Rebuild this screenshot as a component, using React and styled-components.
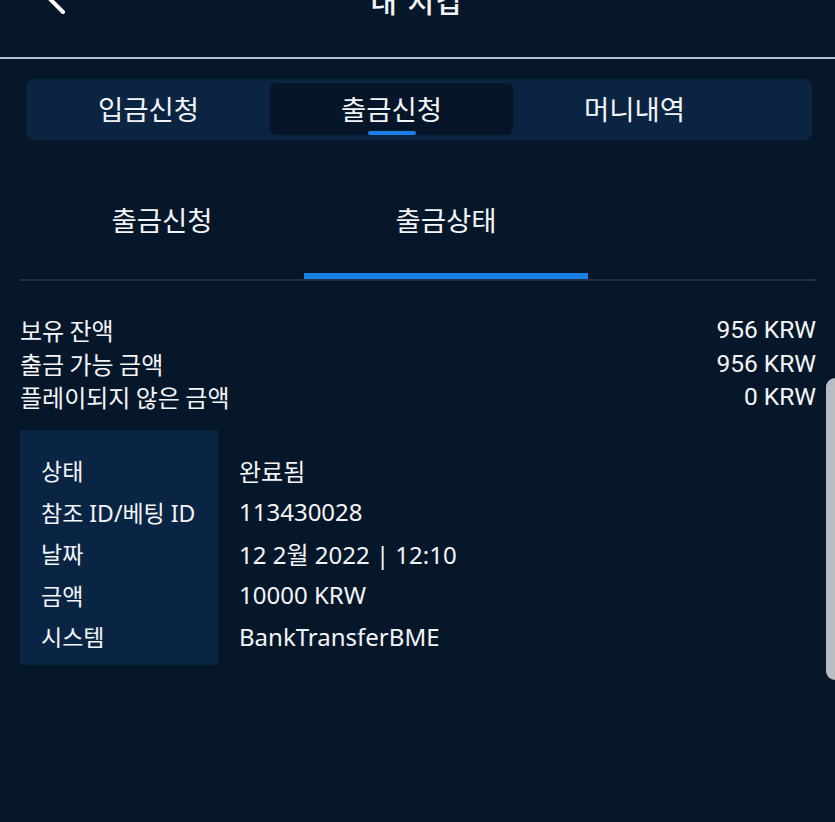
import React, { useState } from "react";
import styled, { createGlobalStyle } from "styled-components";

const GlobalStyle = createGlobalStyle`
  html, body {
    margin: 0;
    padding: 0;
    background: #07172a;
  }
  body {
    font-family: "Noto Sans", "Noto Sans CJK KR", sans-serif;
    color: #f3f5f8;
  }
  * { box-sizing: border-box; }
`;

const Page = styled.div`
  position: relative;
  width: 835px;
  height: 822px;
  overflow: hidden;
  background: #07172a;
`;

const Header = styled.header`
  position: relative;
  height: 59px;
  display: flex;
  justify-content: center;
  border-bottom: 2px solid #b4bcc5;
`;

const BackButton = styled.button`
  position: absolute;
  left: 40px;
  top: -25px;
  width: 30px;
  height: 45px;
  padding: 0;
  border: 0;
  background: none;
  color: #fff;
`;

const Title = styled.h1`
  margin: -14px 0 0;
  font-family: "Noto Sans CJK KR", sans-serif;
  font-size: 29px;
  font-weight: 500;
  line-height: 29px;
  letter-spacing: 2px;
`;

const Segment = styled.nav`
  display: flex;
  margin: 20px 23px 0 26px;
  height: 61px;
  padding: 4px 0 5px 1px;
  background: #0b2441;
  border-radius: 8px;
`;

const SegmentTab = styled.button`
  position: relative;
  width: 243px;
  border: 0;
  border-radius: 6px;
  background: ${(p) => (p.$active ? "#061628" : "transparent")};
  color: #f3f5f8;
  font-family: "Noto Sans CJK KR", sans-serif;
  font-size: 27.5px;
  font-weight: 400;
  padding: 0 0 2px;
  cursor: pointer;

  &::after {
    content: "";
    display: ${(p) => (p.$active ? "block" : "none")};
    position: absolute;
    left: 50%;
    bottom: 0;
    width: 48px;
    height: 4px;
    margin-left: -24px;
    border-radius: 2px;
    background: #1a80e6;
  }
`;

const SubTabs = styled.div`
  display: flex;
  margin: 0 20px;
  border-bottom: 2px solid #243244;
`;

const SubTab = styled.button`
  width: 284px;
  height: 139px;
  padding: 59px 0 0;
  display: flex;
  justify-content: center;
  align-items: flex-start;
  border: 0;
  border-bottom: 6px solid ${(p) => (p.$active ? "#1a80e6" : "transparent")};
  background: none;
  color: #f3f5f8;
  font-family: "Noto Sans CJK KR", sans-serif;
  font-size: 27.5px;
  font-weight: 400;
  line-height: 40px;
  cursor: pointer;
`;

const Balances = styled.div`
  margin: 32px 19px 0 20px;
  display: flex;
  flex-direction: column;
`;

const BalanceRow = styled.div`
  display: flex;
  justify-content: space-between;
  align-items: center;
  height: 33.5px;
  font-family: "Noto Sans CJK KR", sans-serif;
  font-size: 24px;
`;

const Amount = styled.span`
  font-family: "Roboto", "Noto Sans CJK KR", sans-serif;
  font-size: 24.5px;
`;

const Details = styled.div`
  display: grid;
  grid-template-columns: 198px 1fr;
  margin: 16px 20px 0;
`;

const Column = styled.div`
  display: flex;
  flex-direction: column;
  padding: 20px 0 8px 21px;
  background: ${(p) => (p.$shaded ? "#0a2543" : "transparent")};
`;

const Cell = styled.div`
  height: 41.5px;
  display: flex;
  align-items: center;
  font-family: "Noto Sans", "Noto Sans CJK KR", sans-serif;
  font-size: ${(p) => (p.$value ? "24px" : "23px")};
  white-space: nowrap;
`;

const Scrollbar = styled.div`
  position: absolute;
  right: 0;
  top: 378px;
  width: 9px;
  height: 302px;
  background: #b9bdc2;
  border-radius: 9px 0 0 9px;
`;

const balances = [
  ["보유 잔액", "956 KRW"],
  ["출금 가능 금액", "956 KRW"],
  ["플레이되지 않은 금액", "0 KRW"],
];

const details = [
  ["상태", "완료됨"],
  ["참조 ID/베팅 ID", "113430028"],
  ["날짜", "12 2월 2022 | 12:10"],
  ["금액", "10000 KRW"],
  ["시스템", "BankTransferBME"],
];

const tabs = ["입금신청", "출금신청", "머니내역"];

export default function App() {
  const [tab, setTab] = useState(1);
  const [subTab, setSubTab] = useState(1);

  return (
    <Page>
      <GlobalStyle />
      <Header>
        <BackButton aria-label="back">
          <svg width="30" height="45" viewBox="0 0 30 45" fill="none">
            <path d="M23 7 L8 22 L23 37" stroke="currentColor" strokeWidth="4" strokeLinecap="round" strokeLinejoin="round" />
          </svg>
        </BackButton>
        <Title>내 지갑</Title>
      </Header>

      <Segment>
        {tabs.map((t, i) => (
          <SegmentTab key={t} $active={i === tab} onClick={() => setTab(i)}>
            {t}
          </SegmentTab>
        ))}
      </Segment>

      <SubTabs>
        <SubTab $active={subTab === 0} onClick={() => setSubTab(0)}>출금신청</SubTab>
        <SubTab $active={subTab === 1} onClick={() => setSubTab(1)}>출금상태</SubTab>
      </SubTabs>

      <Balances>
        {balances.map(([label, value]) => (
          <BalanceRow key={label}>
            <span>{label}</span>
            <Amount>{value}</Amount>
          </BalanceRow>
        ))}
      </Balances>

      <Details>
        <Column $shaded>
          {details.map(([label]) => (
            <Cell key={label}>{label}</Cell>
          ))}
        </Column>
        <Column>
          {details.map(([label, value]) => (
            <Cell key={label} $value>{value}</Cell>
          ))}
        </Column>
      </Details>

      <Scrollbar />
    </Page>
  );
}
